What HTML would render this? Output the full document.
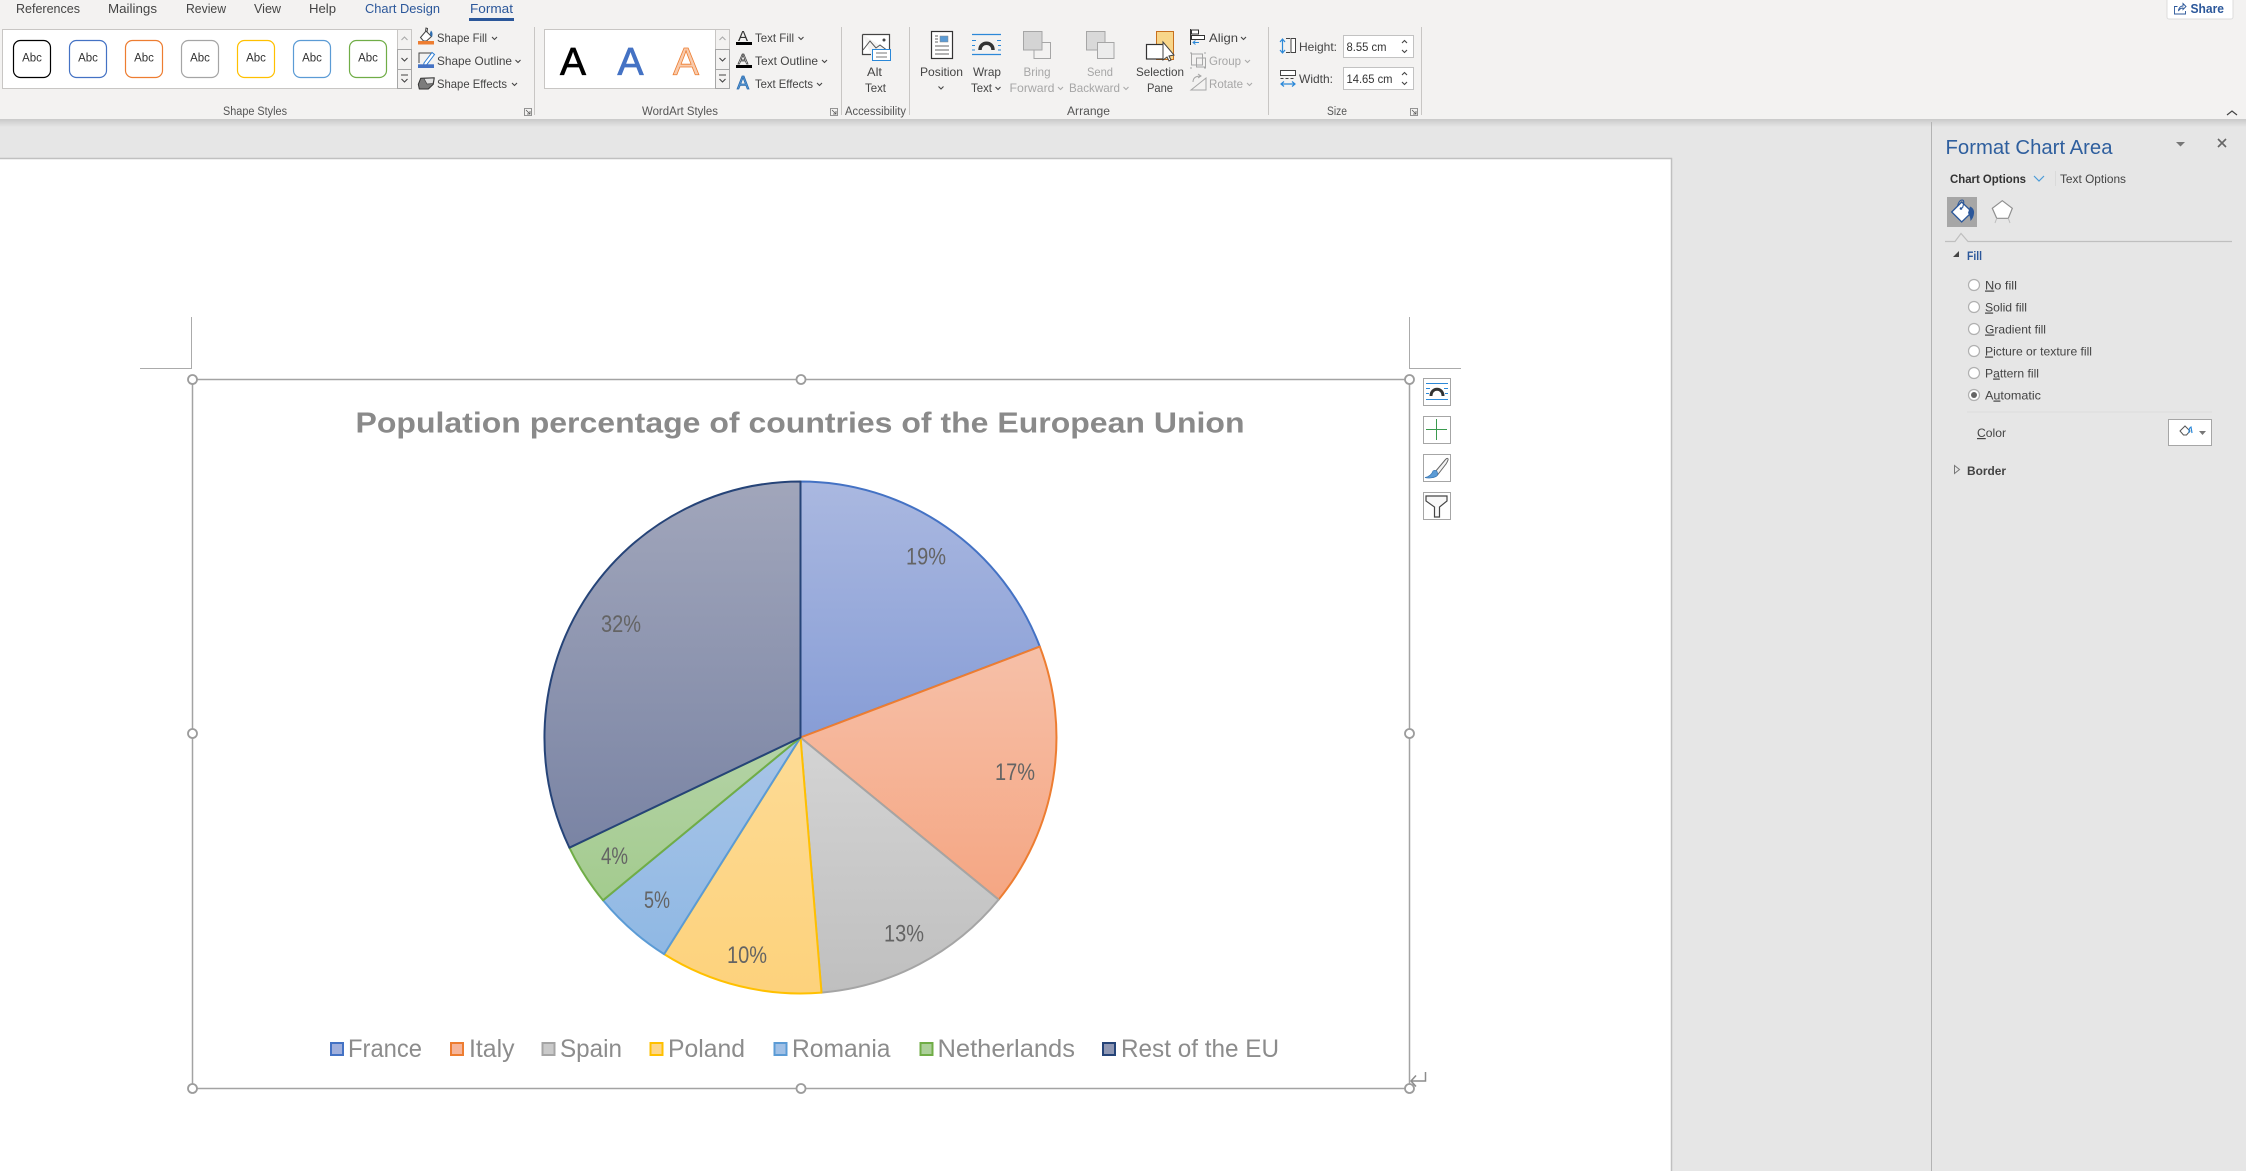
<!DOCTYPE html>
<html><head><meta charset="utf-8"><title>Format Chart Area</title>
<style>
html,body{margin:0;padding:0;background:#e6e6e6;width:2246px;height:1171px;overflow:hidden}
svg{display:block;position:absolute;left:0;top:0}
text{font-family:"Liberation Sans",sans-serif;font-size:12px;fill:#444;white-space:pre}
.g{fill:#a6a6a6}
.lb{font-size:11.5px;fill:#555}
.abc{font-size:11.5px;fill:#333;text-anchor:middle}
.p{font-size:12px;fill:#444}
.pct{font-size:24px;fill:#646464}
.leg{font-size:25px;fill:#8c8c8c}
.ch{fill:none;stroke:#444;stroke-width:1.1}
.chg{fill:none;stroke:#aaa;stroke-width:1.1}
</style></head><body>
<svg width="2246" height="1171" viewBox="0 0 2246 1171" xmlns="http://www.w3.org/2000/svg">
<defs>
<linearGradient id="sh" x1="0" y1="0" x2="0" y2="1"><stop offset="0" stop-color="#c9c9c9"/><stop offset="1" stop-color="#e6e6e6"/></linearGradient>
<linearGradient id="a" x1="0" y1="0" x2="0" y2="1"><stop offset="0" stop-color="#aab8e0"/><stop offset="1" stop-color="#879dd6"/></linearGradient>
<linearGradient id="b" x1="0" y1="0" x2="0" y2="1"><stop offset="0" stop-color="#f6c0a8"/><stop offset="1" stop-color="#f5a683"/></linearGradient>
<linearGradient id="c" x1="0" y1="0" x2="0" y2="1"><stop offset="0" stop-color="#d4d4d4"/><stop offset="1" stop-color="#bfbfbf"/></linearGradient>
<linearGradient id="d" x1="0" y1="0" x2="0" y2="1"><stop offset="0" stop-color="#fddb95"/><stop offset="1" stop-color="#fdd27c"/></linearGradient>
<linearGradient id="e" x1="0" y1="0" x2="0" y2="1"><stop offset="0" stop-color="#a9c5e7"/><stop offset="1" stop-color="#8fb8e4"/></linearGradient>
<linearGradient id="f" x1="0" y1="0" x2="0" y2="1"><stop offset="0" stop-color="#b4d3a6"/><stop offset="1" stop-color="#a3cb8e"/></linearGradient>
<linearGradient id="h" x1="0" y1="0" x2="0" y2="1"><stop offset="0" stop-color="#a1a6bb"/><stop offset="1" stop-color="#7a84a4"/></linearGradient>
</defs>

<!-- background -->
<rect width="2246" height="1171" fill="#e6e6e6"/>
<rect x="0" y="119" width="2246" height="8" fill="url(#sh)"/>
<rect x="-2" y="158.500" width="1673.500" height="1020" fill="#fff" stroke="#c0c0c0" stroke-width="1.500"/>
<rect x="0" y="0" width="2246" height="119" fill="#f3f2f1"/>

<!-- tabs -->
<text x="16" y="13" textLength="64" lengthAdjust="spacingAndGlyphs" style="font-size:13px">References</text>
<text x="108" y="13" textLength="49" lengthAdjust="spacingAndGlyphs" style="font-size:13px">Mailings</text>
<text x="186" y="13" textLength="40" lengthAdjust="spacingAndGlyphs" style="font-size:13px">Review</text>
<text x="254" y="13" textLength="27" lengthAdjust="spacingAndGlyphs" style="font-size:13px">View</text>
<text x="309" y="13" textLength="27" lengthAdjust="spacingAndGlyphs" style="font-size:13px">Help</text>
<text x="365" y="13" textLength="75" lengthAdjust="spacingAndGlyphs" style="font-size:13px;fill:#2b579a">Chart Design</text>
<text x="470" y="13" textLength="43" lengthAdjust="spacingAndGlyphs" style="font-size:13px;fill:#2b579a">Format</text>
<rect x="469" y="18" width="45" height="3" fill="#2b579a"/>

<!-- Share -->
<rect x="2167" y="-3" width="66" height="22" rx="2" fill="#fff" stroke="#dcdcdc"/>
<path d="M2177.500 6.500h-3v7.500h11v-3M2178.500 11c0-3 2-5 4.500-5V3.500l3 3-3 3V8c-2 0-3.500 1-4.500 3z" fill="none" stroke="#2b579a" stroke-width=".9"/>
<text x="2190.500" y="13" textLength="33.500" lengthAdjust="spacingAndGlyphs" style="font-size:12.500px;fill:#2b579a;font-weight:bold">Share</text>
<path d="M2227 115l5-4 5 4" fill="none" stroke="#444" stroke-width="1.200"/>

<!-- shape gallery -->
<rect x="2.500" y="29.500" width="395" height="59" fill="#fff" stroke="#c8c6c4"/>
<rect x="397.500" y="29.500" width="14" height="20" fill="#f3f2f1" stroke="#c8c6c4"/>
<rect x="397.500" y="49.500" width="14" height="20" fill="#f3f2f1" stroke="#a6a6a6"/>
<rect x="397.500" y="69.500" width="14" height="19" fill="#f3f2f1" stroke="#a6a6a6"/>
<path d="M401.500 40l3-3 3 3" class="chg"/><path d="M401.500 58l3 3 3-3" class="ch"/><path d="M401 75h7M401.500 79l3 3 3-3" class="ch"/>
<g fill="#fff" stroke-width="1.200">
<rect x="13.500" y="40.500" width="37" height="37" rx="7" stroke="#000"/>
<rect x="69.500" y="40.500" width="37" height="37" rx="7" stroke="#4472c4"/>
<rect x="125.500" y="40.500" width="37" height="37" rx="7" stroke="#ed7d31"/>
<rect x="181.500" y="40.500" width="37" height="37" rx="7" stroke="#a5a5a5"/>
<rect x="237.500" y="40.500" width="37" height="37" rx="7" stroke="#ffc000"/>
<rect x="293.500" y="40.500" width="37" height="37" rx="7" stroke="#5b9bd5"/>
<rect x="349.500" y="40.500" width="37" height="37" rx="7" stroke="#70ad47"/>
</g>
<text class="abc" x="32" y="61.500">Abc</text><text class="abc" x="88" y="61.500">Abc</text><text class="abc" x="144" y="61.500">Abc</text><text class="abc" x="200" y="61.500">Abc</text><text class="abc" x="256" y="61.500">Abc</text><text class="abc" x="312" y="61.500">Abc</text><text class="abc" x="368" y="61.500">Abc</text>

<!-- shape fill etc -->
<path d="M420.500 37.500l5.500-6.500 5.500 5.500-5 4.500h-3zM425.500 31l.5-3 1.500.5-.5 4" fill="#fff" stroke="#444"/><path d="M431 30.500c1.500 1.500 2 3.500 1 6.500-1.500-1-2-2.500-2-4z" fill="#2b6cb0"/>
<rect x="418" y="41" width="16" height="3.500" fill="#ed7d31"/>
<path d="M419 63v-10h14" fill="none" stroke="#444"/><path d="M424 63l8-10.500 2.500 2-8 10.500-3 .8z" fill="#fff" stroke="#2b7cd3"/>
<rect x="418" y="64.300" width="16" height="3.700" fill="#4472c4"/>
<path d="M420.700 78.300l13.600-.6-1 6.600-5 4.700h-9l-1-4.700z" fill="#7c7c7c" stroke="#333" stroke-linejoin="round"/><path d="M424 78.500l3 5.500 6-.5 1-5.500z" fill="#e2e2e2" stroke="#444" stroke-width=".7"/>
<text x="437" y="42" textLength="50" lengthAdjust="spacingAndGlyphs">Shape Fill</text><path d="M492 37l2.500 2.500 2.500-2.500" class="ch"/>
<text x="437" y="65" textLength="75" lengthAdjust="spacingAndGlyphs">Shape Outline</text><path d="M515.500 60l2.500 2.500 2.500-2.500" class="ch"/>
<text x="437" y="88" textLength="70" lengthAdjust="spacingAndGlyphs">Shape Effects</text><path d="M512 83l2.500 2.500 2.500-2.500" class="ch"/>
<text class="lb" x="223" y="115" textLength="64" lengthAdjust="spacingAndGlyphs">Shape Styles</text>
<path d="M524.500 108.500h7v7h-7z" fill="none" stroke="#777" stroke-width="0.800"/><path d="M526 110l4 4m0-3v3h-3" fill="none" stroke="#555" stroke-width="0.800"/>
<rect x="534" y="27" width="1" height="88" fill="#c8c6c4"/>

<!-- wordart gallery -->
<rect x="544.500" y="29.500" width="171" height="59" fill="#fff" stroke="#c8c6c4"/>
<rect x="715.500" y="29.500" width="14" height="20" fill="#f3f2f1" stroke="#c8c6c4"/>
<rect x="715.500" y="49.500" width="14" height="20" fill="#f3f2f1" stroke="#a6a6a6"/>
<rect x="715.500" y="69.500" width="14" height="19" fill="#f3f2f1" stroke="#a6a6a6"/>
<path d="M719.500 40l3-3 3 3" class="chg"/><path d="M719.500 58l3 3 3-3" class="ch"/><path d="M719 75h7M719.500 79l3 3 3-3" class="ch"/>
<text x="560" y="75" style="font-size:39px;fill:#000;stroke:#000;stroke-width:.7">A</text>
<text x="617.500" y="75" style="font-size:39px;fill:#4472c4;stroke:#4472c4;stroke-width:.8">A</text>
<text x="673" y="75" style="font-size:39px;fill:#f8cbad;stroke:#ed7d31;stroke-width:.8">A</text>
<text x="738" y="41" style="font-size:15px;fill:#333">A</text><rect x="736" y="42" width="16" height="3" fill="#000"/>
<text x="738" y="64" style="font-size:15px;fill:#fff;stroke:#444;stroke-width:.8">A</text><rect x="736" y="65" width="16" height="3" fill="#000"/>
<text x="737" y="89" style="font-size:18px;fill:#5b9bd5;stroke:#2b6cb0;stroke-width:.8">A</text>
<text x="755" y="42" textLength="39" lengthAdjust="spacingAndGlyphs">Text Fill</text><path d="M798.500 37l2.500 2.500 2.500-2.500" class="ch"/>
<text x="755" y="65" textLength="63" lengthAdjust="spacingAndGlyphs">Text Outline</text><path d="M822 60l2.500 2.500 2.500-2.500" class="ch"/>
<text x="755" y="88" textLength="58" lengthAdjust="spacingAndGlyphs">Text Effects</text><path d="M817 83l2.500 2.500 2.500-2.500" class="ch"/>
<text class="lb" x="642" y="115" textLength="76" lengthAdjust="spacingAndGlyphs">WordArt Styles</text>
<path d="M830.500 108.500h7v7h-7z" fill="none" stroke="#777" stroke-width="0.800"/><path d="M832 110l4 4m0-3v3h-3" fill="none" stroke="#555" stroke-width="0.800"/>
<rect x="841" y="27" width="1" height="88" fill="#c8c6c4"/>

<!-- accessibility -->
<path d="M862.500 34.500h27v17M871 54.500h-8.500v-20" fill="#fff" stroke="#444" stroke-width="1.200"/>
<path d="M863 50l7-9 6 7 4-3 8 6" fill="none" stroke="#555"/><circle cx="884" cy="40" r="1.500" fill="#444"/>
<rect x="872.500" y="49.500" width="18" height="11" fill="#fff" stroke="#2b88d8"/><path d="M876 53h11M876 57h11" stroke="#777"/>
<text x="867" y="76" textLength="15" lengthAdjust="spacingAndGlyphs">Alt</text>
<text x="865" y="92" textLength="21" lengthAdjust="spacingAndGlyphs">Text</text>
<text class="lb" x="845" y="115" textLength="61" lengthAdjust="spacingAndGlyphs">Accessibility</text>
<rect x="909" y="27" width="1" height="88" fill="#c8c6c4"/>

<!-- position -->
<rect x="931.500" y="31.500" width="21" height="27" fill="#fff" stroke="#333" stroke-width="1.200"/>
<rect x="940" y="36" width="8" height="6" fill="#5b9bd5" stroke="#888" stroke-width=".5"/>
<path d="M935 36h3M935 39h3M935 42h3M935 46h14M935 50h14M935 54h14" stroke="#666"/>
<text x="920" y="76" textLength="43" lengthAdjust="spacingAndGlyphs">Position</text><path d="M938.500 86.500l2.500 2.500 2.500-2.500" class="ch"/>

<!-- wrap -->
<path d="M972 34.500h29M972 54.500h29" stroke="#2b88d8" stroke-width="1.200"/>
<path d="M972 40.500h4M997 40.500h4M972 45.500h3M998 45.500h3M972 50h3M998 50h3" stroke="#2b88d8"/>
<path d="M980 50c0-9 13-9 13 0" fill="none" stroke="#333" stroke-width="3.500"/>
<text x="973" y="76" textLength="28" lengthAdjust="spacingAndGlyphs">Wrap</text>
<text x="971" y="92" textLength="21" lengthAdjust="spacingAndGlyphs">Text</text><path d="M995.500 87l2.500 2.500 2.500-2.500" class="ch"/>

<!-- bring / send -->
<rect x="1034" y="42.500" width="16.500" height="16" fill="#f3f2f1" stroke="#a6a6a6"/>
<rect x="1023.500" y="31.500" width="18.500" height="18.500" fill="#d4d4d4" stroke="#a6a6a6"/>
<text class="g" x="1023.500" y="76" textLength="27" lengthAdjust="spacingAndGlyphs">Bring</text>
<text class="g" x="1009.500" y="92" textLength="45" lengthAdjust="spacingAndGlyphs">Forward</text><path d="M1058 87l2.500 2.500 2.500-2.500" class="chg"/>
<rect x="1086.500" y="31.500" width="18.500" height="18.500" fill="#d9d9d9" stroke="#a6a6a6"/>
<rect x="1097.500" y="42.500" width="16.500" height="16" fill="#ececec" stroke="#a6a6a6"/>
<text class="g" x="1087" y="76" textLength="26" lengthAdjust="spacingAndGlyphs">Send</text>
<text class="g" x="1069" y="92" textLength="51" lengthAdjust="spacingAndGlyphs">Backward</text><path d="M1123.500 87l2.500 2.500 2.500-2.500" class="chg"/>

<!-- selection -->
<rect x="1156.500" y="31.500" width="17" height="28" fill="#f8d68a" stroke="#c8701e"/>
<rect x="1146.500" y="44.500" width="17" height="14.500" fill="#fff" stroke="#333" stroke-width="1.200"/>
<path d="M1163 42v18l4-3 2 4 2-1-2-4 5-1z" fill="#fff" stroke="#444"/>
<text x="1136" y="76" textLength="48" lengthAdjust="spacingAndGlyphs">Selection</text>
<text x="1147" y="92" textLength="26" lengthAdjust="spacingAndGlyphs">Pane</text>

<!-- align -->
<path d="M1190.500 29v16" stroke="#333"/><rect x="1191.500" y="30" width="7" height="4" fill="#fff" stroke="#333"/><rect x="1191.500" y="35.500" width="13" height="4" fill="#fff" stroke="#333"/>
<path d="M1199 42.500h-6m2.500-2l-2.500 2 2.500 2" fill="none" stroke="#2b88d8"/>
<text x="1209" y="42" textLength="29" lengthAdjust="spacingAndGlyphs">Align</text><path d="M1241 37l2.500 2.500 2.500-2.500" class="ch"/>
<rect x="1191.500" y="54" width="11" height="11" fill="none" stroke="#a6a6a6"/><rect x="1196.500" y="58" width="9" height="9" fill="none" stroke="#a6a6a6"/>
<path d="M1190 53h2M1204 53h2M1190 68h2M1204 68h2" stroke="#a6a6a6"/>
<text class="g" x="1209" y="65" textLength="32" lengthAdjust="spacingAndGlyphs">Group</text><path d="M1245 60l2.500 2.500 2.500-2.500" class="chg"/>
<path d="M1191 90h15V78l-15 12zM1193 82c0-4 3-6 8-6m-3-2l3 2-3 2" fill="none" stroke="#a6a6a6"/>
<text class="g" x="1209" y="88" textLength="34" lengthAdjust="spacingAndGlyphs">Rotate</text><path d="M1247 83l2.500 2.500 2.500-2.500" class="chg"/>
<text class="lb" x="1067" y="115" textLength="43" lengthAdjust="spacingAndGlyphs">Arrange</text>
<rect x="1268" y="27" width="1" height="88" fill="#c8c6c4"/>

<!-- size -->
<path d="M1282.500 39v14M1280 42l2.500-3 2.500 3M1280 50l2.500 3 2.500-3" fill="none" stroke="#2b88d8" stroke-width="1.200"/>
<rect x="1291" y="38.500" width="4.500" height="14" fill="#fff" stroke="#444"/><path d="M1286 38.500h4M1286 52.500h4" stroke="#444"/>
<text x="1299" y="51" textLength="38" lengthAdjust="spacingAndGlyphs">Height:</text>
<rect x="1343.500" y="35.500" width="70" height="22" fill="#fff" stroke="#c2c2c2"/>
<text x="1346.500" y="51" textLength="40" lengthAdjust="spacingAndGlyphs" style="fill:#333">8.55 cm</text>
<path d="M1402 43l2.500-2.500 2.500 2.500M1402 50l2.500 2.500 2.500-2.500" class="ch"/>
<rect x="1280.500" y="70.500" width="15" height="5" fill="#fff" stroke="#444"/><path d="M1280.500 78.500h15" stroke="#444" stroke-dasharray="3 2"/>
<path d="M1281 84h14M1284 81.500l-3 2.500 3 2.500M1292 81.500l3 2.500-3 2.500" fill="none" stroke="#2b88d8" stroke-width="1.200"/>
<text x="1299" y="83" textLength="34" lengthAdjust="spacingAndGlyphs">Width:</text>
<rect x="1343.500" y="67.500" width="70" height="22" fill="#fff" stroke="#c2c2c2"/>
<text x="1346.500" y="83" textLength="46" lengthAdjust="spacingAndGlyphs" style="fill:#333">14.65 cm</text>
<path d="M1402 75l2.500-2.500 2.500 2.500M1402 82l2.500 2.500 2.500-2.500" class="ch"/>
<text class="lb" x="1327" y="115" textLength="20" lengthAdjust="spacingAndGlyphs">Size</text>
<path d="M1410.500 108.500h7v7h-7z" fill="none" stroke="#777" stroke-width="0.800"/><path d="M1412 110l4 4m0-3v3h-3" fill="none" stroke="#555" stroke-width="0.800"/>
<rect x="1421" y="27" width="1" height="88" fill="#c8c6c4"/>

<!-- crop marks -->
<path d="M191.500 317v51.500H140M1409.500 317v51.500H1461" fill="none" stroke="#ababab"/>

<!-- chart frame -->
<rect x="192.500" y="379.500" width="1217" height="709" fill="#fff" stroke="#a3a3a3" stroke-width="1.500"/>

<!-- title -->
<text x="355.500" y="432.500" textLength="889" lengthAdjust="spacingAndGlyphs" style="font-size:29px;font-weight:bold;fill:#8a8a8a">Population percentage of countries of the European Union</text>

<!-- pie -->
<g stroke-width="2" stroke-linejoin="round">
<path d="M800.500 737.500V481.500A256 256 0 0 1 1039.800 646.600Z" fill="url(#a)" stroke="#4472c4"/>
<path d="M800.500 737.500L1039.800 646.600A256 256 0 0 1 998.600 899.600Z" fill="url(#b)" stroke="#ed7d31"/>
<path d="M800.500 737.500L998.600 899.600A256 256 0 0 1 821.500 992.600Z" fill="url(#c)" stroke="#a5a5a5"/>
<path d="M800.500 737.500L821.500 992.600A256 256 0 0 1 664.100 954.100Z" fill="url(#d)" stroke="#ffc000"/>
<path d="M800.500 737.500L664.100 954.100A256 256 0 0 1 603 900.300Z" fill="url(#e)" stroke="#5b9bd5"/>
<path d="M800.500 737.500L603 900.300A256 256 0 0 1 569.400 847.700Z" fill="url(#f)" stroke="#70ad47"/>
<path d="M800.500 737.500L569.400 847.700A256 256 0 0 1 800.500 481.500Z" fill="url(#h)" stroke="#264478"/>
</g>
<text class="pct" x="906" y="564.500" textLength="40" lengthAdjust="spacingAndGlyphs">19%</text>
<text class="pct" x="995" y="780" textLength="40" lengthAdjust="spacingAndGlyphs">17%</text>
<text class="pct" x="884" y="941.500" textLength="40" lengthAdjust="spacingAndGlyphs">13%</text>
<text class="pct" x="727" y="963" textLength="40" lengthAdjust="spacingAndGlyphs">10%</text>
<text class="pct" x="644" y="908" textLength="26" lengthAdjust="spacingAndGlyphs">5%</text>
<text class="pct" x="601" y="864" textLength="27" lengthAdjust="spacingAndGlyphs">4%</text>
<text class="pct" x="601" y="632" textLength="40" lengthAdjust="spacingAndGlyphs">32%</text>

<!-- legend -->
<g stroke-width="2">
<rect x="331" y="1043" width="12" height="12" fill="#a0afdc" stroke="#4472c4"/>
<rect x="451" y="1043" width="12" height="12" fill="#f6b59a" stroke="#ed7d31"/>
<rect x="542.500" y="1043" width="12" height="12" fill="#cacaca" stroke="#a5a5a5"/>
<rect x="650.500" y="1043" width="12" height="12" fill="#fdd68a" stroke="#ffc000"/>
<rect x="774.500" y="1043" width="12" height="12" fill="#a0c0e6" stroke="#5b9bd5"/>
<rect x="920.500" y="1043" width="12" height="12" fill="#acd09a" stroke="#70ad47"/>
<rect x="1103" y="1043" width="12" height="12" fill="#8f97b3" stroke="#264478"/>
</g>
<text class="leg" x="348" y="1057" textLength="74" lengthAdjust="spacingAndGlyphs">France</text>
<text class="leg" x="469" y="1057" textLength="45.500" lengthAdjust="spacingAndGlyphs">Italy</text>
<text class="leg" x="560" y="1057" textLength="62" lengthAdjust="spacingAndGlyphs">Spain</text>
<text class="leg" x="668" y="1057" textLength="77" lengthAdjust="spacingAndGlyphs">Poland</text>
<text class="leg" x="792" y="1057" textLength="98.500" lengthAdjust="spacingAndGlyphs">Romania</text>
<text class="leg" x="937.500" y="1057" textLength="137.500" lengthAdjust="spacingAndGlyphs">Netherlands</text>
<text class="leg" x="1121" y="1057" textLength="158" lengthAdjust="spacingAndGlyphs">Rest of the EU</text>

<!-- handles -->
<g fill="#fff" stroke="#9c9c9c" stroke-width="1.800">
<circle cx="192.500" cy="379.500" r="4.500"/><circle cx="801" cy="379.500" r="4.500"/><circle cx="1409.500" cy="379.500" r="4.500"/>
<circle cx="192.500" cy="733.500" r="4.500"/><circle cx="1409.500" cy="733.500" r="4.500"/>
<circle cx="192.500" cy="1088.500" r="4.500"/><circle cx="801" cy="1088.500" r="4.500"/><circle cx="1409.500" cy="1088.500" r="4.500"/>
</g>
<path d="M1425.500 1072v9h-14M1416 1075.500l-5 5.500 5 5.500" fill="none" stroke="#8c8c8c" stroke-width="1.500"/>

<!-- side buttons -->
<g fill="#fff" stroke="#a6a6a6">
<rect x="1423.500" y="378.500" width="27" height="27"/><rect x="1423.500" y="416.500" width="27" height="27"/><rect x="1423.500" y="454.500" width="27" height="27"/><rect x="1423.500" y="492.500" width="27" height="27"/>
</g>
<path d="M1426 383.500h22M1426 399.500h22M1426 388.500h4M1444 388.500h4M1426 393.500h3M1445 393.500h3" stroke="#2b88d8" fill="none"/>
<path d="M1431 396c0-9 12-9 12 0" fill="none" stroke="#333" stroke-width="3"/>
<path d="M1436.500 419v21M1426 429.500h21" stroke="#3a9a4e" stroke-width="1"/>
<path d="M1435 472l10.500-12.500c1.500-1.500 3-1.500 2.500.5-.5 1.500-1 2.500-2 4l-8.500 11z" fill="#f3f3f3" stroke="#666"/>
<path d="M1433 471c-1 3-4 6-8 6.500 3 1 8 .5 11-1 2-1 2-3 1-5-1-1.500-3-1.500-4-.5z" fill="#5b9bd5" stroke="#3a78b5" stroke-width=".7"/>
<path d="M1426 496h21v5l-7.500 6v10h-5v-10l-8.500-6z" fill="#f8f8f8" stroke="#444" stroke-width="1.200"/>

<!-- panel -->
<rect x="1931" y="122" width="1" height="1049" fill="#b3b3b3"/>
<text x="1945.500" y="154" textLength="167" lengthAdjust="spacingAndGlyphs" style="font-size:20px;fill:#2f5f9e">Format Chart Area</text>
<path d="M2176 142h9l-4.500 4.500z" fill="#777"/>
<path d="M2218 139l8 8m0-8l-8 8" stroke="#666" stroke-width="1.600"/>
<text x="1950" y="183" textLength="76" lengthAdjust="spacingAndGlyphs" style="font-weight:bold;fill:#333">Chart Options</text>
<path d="M2034 176l5 5 5-5" fill="none" stroke="#4a9bd8" stroke-width="1.200"/>
<rect x="2055" y="171" width="1" height="15" fill="#dadada"/>
<text x="2060" y="183" textLength="66" lengthAdjust="spacingAndGlyphs">Text Options</text>
<rect x="1947" y="197" width="30" height="30" fill="#a6a6a6"/>
<path d="M1951.700 212l10-10 10.300 10-10.300 10z" fill="#fff" stroke="#2b579a" stroke-width="1.300"/>
<path d="M1957.500 206c1-4 2.500-6 4.500-6 2.500 0 2 3 .5 8" fill="none" stroke="#2b579a" stroke-width="1.100"/><circle cx="1961" cy="208.500" r="1.300" fill="#2b579a"/>
<path d="M1970 206.500c3 1 4.500 4 4 7-.300 3-1.500 5.500-3.500 7.500 0-3-1-6-2.500-8z" fill="#2b579a"/>
<path d="M2002.300 200.700l10 7.600-4 10h-11.600l-4.400-10z" fill="#fff" stroke="#8f8f8f" stroke-width="1.200"/>
<path d="M1995 223l1.700-4.700M2010 223l-1.700-4.700" stroke="#bdbdbd"/>
<path d="M1945 241.500h10l6-8 7 8h264" fill="none" stroke="#bfbfbf" stroke-width="1.200"/>
<path d="M1953 257h6v-6z" fill="#444"/>
<text x="1967" y="260" textLength="15" lengthAdjust="spacingAndGlyphs" style="font-weight:bold;fill:#2b579a">Fill</text>
<g fill="#fff" stroke="#b0b0b0" stroke-width="1.200">
<circle cx="1974" cy="285" r="5.500"/><circle cx="1974" cy="307" r="5.500"/><circle cx="1974" cy="329" r="5.500"/><circle cx="1974" cy="351" r="5.500"/><circle cx="1974" cy="373" r="5.500"/><circle cx="1974" cy="395" r="5.500"/>
</g>
<circle cx="1974" cy="395" r="3" fill="#666"/>
<text class="p" x="1985" y="289.500" textLength="32" lengthAdjust="spacingAndGlyphs"><tspan text-decoration="underline">N</tspan>o fill</text>
<text class="p" x="1985" y="311.500" textLength="42" lengthAdjust="spacingAndGlyphs"><tspan text-decoration="underline">S</tspan>olid fill</text>
<text class="p" x="1985" y="333.500" textLength="61" lengthAdjust="spacingAndGlyphs"><tspan text-decoration="underline">G</tspan>radient fill</text>
<text class="p" x="1985" y="355.500" textLength="107" lengthAdjust="spacingAndGlyphs"><tspan text-decoration="underline">P</tspan>icture or texture fill</text>
<text class="p" x="1985" y="377.500" textLength="54" lengthAdjust="spacingAndGlyphs">P<tspan text-decoration="underline">a</tspan>ttern fill</text>
<text class="p" x="1985" y="399.500" textLength="56" lengthAdjust="spacingAndGlyphs">A<tspan text-decoration="underline">u</tspan>tomatic</text>
<rect x="1967" y="411.500" width="245" height="1" fill="#dcdcdc"/>
<text class="p" x="1977" y="437" textLength="29" lengthAdjust="spacingAndGlyphs"><tspan text-decoration="underline">C</tspan>olor</text>
<rect x="2168.500" y="419.500" width="43" height="26" fill="#fff" stroke="#a6a6a6"/>
<path d="M2180 431l5-5 5 5-3.500 4h-3z" fill="#fff" stroke="#555"/><path d="M2189 433c0-3 0-5 2-6l1 6" fill="none" stroke="#2b88d8" stroke-width="1.200"/>
<path d="M2199 431h7l-3.500 4z" fill="#777"/>
<path d="M1954.500 465.500l5 4-5 4z" fill="none" stroke="#777"/>
<text x="1967" y="475" textLength="39" lengthAdjust="spacingAndGlyphs" style="font-weight:bold;fill:#444">Border</text>
</svg>
</body></html>
